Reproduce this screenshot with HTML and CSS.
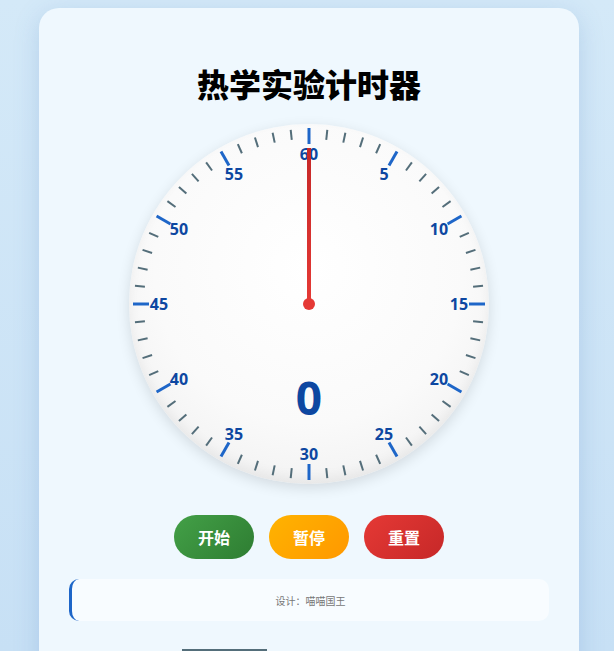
FILE: index.html
```html
<!DOCTYPE html>
<html lang="zh">
<head>
<meta charset="utf-8">
<link rel="stylesheet" href="styles.css">
</head>
<body>
<div class="card">
  <h1 class="title">热学实验计时器</h1>
  <div class="clock">
    <svg class="face" viewBox="-180 -180 360 360" width="360" height="360">
      <g class="minor">
        <line x1="0" y1="-175" x2="0" y2="-165" transform="rotate(6)"/>
        <line x1="0" y1="-175" x2="0" y2="-165" transform="rotate(12)"/>
        <line x1="0" y1="-175" x2="0" y2="-165" transform="rotate(18)"/>
        <line x1="0" y1="-175" x2="0" y2="-165" transform="rotate(24)"/>
        <line x1="0" y1="-175" x2="0" y2="-165" transform="rotate(36)"/>
        <line x1="0" y1="-175" x2="0" y2="-165" transform="rotate(42)"/>
        <line x1="0" y1="-175" x2="0" y2="-165" transform="rotate(48)"/>
        <line x1="0" y1="-175" x2="0" y2="-165" transform="rotate(54)"/>
        <line x1="0" y1="-175" x2="0" y2="-165" transform="rotate(66)"/>
        <line x1="0" y1="-175" x2="0" y2="-165" transform="rotate(72)"/>
        <line x1="0" y1="-175" x2="0" y2="-165" transform="rotate(78)"/>
        <line x1="0" y1="-175" x2="0" y2="-165" transform="rotate(84)"/>
        <line x1="0" y1="-175" x2="0" y2="-165" transform="rotate(96)"/>
        <line x1="0" y1="-175" x2="0" y2="-165" transform="rotate(102)"/>
        <line x1="0" y1="-175" x2="0" y2="-165" transform="rotate(108)"/>
        <line x1="0" y1="-175" x2="0" y2="-165" transform="rotate(114)"/>
        <line x1="0" y1="-175" x2="0" y2="-165" transform="rotate(126)"/>
        <line x1="0" y1="-175" x2="0" y2="-165" transform="rotate(132)"/>
        <line x1="0" y1="-175" x2="0" y2="-165" transform="rotate(138)"/>
        <line x1="0" y1="-175" x2="0" y2="-165" transform="rotate(144)"/>
        <line x1="0" y1="-175" x2="0" y2="-165" transform="rotate(156)"/>
        <line x1="0" y1="-175" x2="0" y2="-165" transform="rotate(162)"/>
        <line x1="0" y1="-175" x2="0" y2="-165" transform="rotate(168)"/>
        <line x1="0" y1="-175" x2="0" y2="-165" transform="rotate(174)"/>
        <line x1="0" y1="-175" x2="0" y2="-165" transform="rotate(186)"/>
        <line x1="0" y1="-175" x2="0" y2="-165" transform="rotate(192)"/>
        <line x1="0" y1="-175" x2="0" y2="-165" transform="rotate(198)"/>
        <line x1="0" y1="-175" x2="0" y2="-165" transform="rotate(204)"/>
        <line x1="0" y1="-175" x2="0" y2="-165" transform="rotate(216)"/>
        <line x1="0" y1="-175" x2="0" y2="-165" transform="rotate(222)"/>
        <line x1="0" y1="-175" x2="0" y2="-165" transform="rotate(228)"/>
        <line x1="0" y1="-175" x2="0" y2="-165" transform="rotate(234)"/>
        <line x1="0" y1="-175" x2="0" y2="-165" transform="rotate(246)"/>
        <line x1="0" y1="-175" x2="0" y2="-165" transform="rotate(252)"/>
        <line x1="0" y1="-175" x2="0" y2="-165" transform="rotate(258)"/>
        <line x1="0" y1="-175" x2="0" y2="-165" transform="rotate(264)"/>
        <line x1="0" y1="-175" x2="0" y2="-165" transform="rotate(276)"/>
        <line x1="0" y1="-175" x2="0" y2="-165" transform="rotate(282)"/>
        <line x1="0" y1="-175" x2="0" y2="-165" transform="rotate(288)"/>
        <line x1="0" y1="-175" x2="0" y2="-165" transform="rotate(294)"/>
        <line x1="0" y1="-175" x2="0" y2="-165" transform="rotate(306)"/>
        <line x1="0" y1="-175" x2="0" y2="-165" transform="rotate(312)"/>
        <line x1="0" y1="-175" x2="0" y2="-165" transform="rotate(318)"/>
        <line x1="0" y1="-175" x2="0" y2="-165" transform="rotate(324)"/>
        <line x1="0" y1="-175" x2="0" y2="-165" transform="rotate(336)"/>
        <line x1="0" y1="-175" x2="0" y2="-165" transform="rotate(342)"/>
        <line x1="0" y1="-175" x2="0" y2="-165" transform="rotate(348)"/>
        <line x1="0" y1="-175" x2="0" y2="-165" transform="rotate(354)"/>
      </g>
      <g class="major">
        <line x1="0" y1="-176" x2="0" y2="-160" transform="rotate(0)"/>
        <line x1="0" y1="-176" x2="0" y2="-160" transform="rotate(30)"/>
        <line x1="0" y1="-176" x2="0" y2="-160" transform="rotate(60)"/>
        <line x1="0" y1="-176" x2="0" y2="-160" transform="rotate(90)"/>
        <line x1="0" y1="-176" x2="0" y2="-160" transform="rotate(120)"/>
        <line x1="0" y1="-176" x2="0" y2="-160" transform="rotate(150)"/>
        <line x1="0" y1="-176" x2="0" y2="-160" transform="rotate(180)"/>
        <line x1="0" y1="-176" x2="0" y2="-160" transform="rotate(210)"/>
        <line x1="0" y1="-176" x2="0" y2="-160" transform="rotate(240)"/>
        <line x1="0" y1="-176" x2="0" y2="-160" transform="rotate(270)"/>
        <line x1="0" y1="-176" x2="0" y2="-160" transform="rotate(300)"/>
        <line x1="0" y1="-176" x2="0" y2="-160" transform="rotate(330)"/>
      </g>
      <g class="nums">
        <text x="0" y="-150">60</text>
        <text x="75" y="-130">5</text>
        <text x="130" y="-75">10</text>
        <text x="150" y="0">15</text>
        <text x="130" y="75">20</text>
        <text x="75" y="130">25</text>
        <text x="0" y="150">30</text>
        <text x="-75" y="130">35</text>
        <text x="-130" y="75">40</text>
        <text x="-150" y="0">45</text>
        <text x="-130" y="-75">50</text>
        <text x="-75" y="-130">55</text>
      </g>
      <defs>
        <linearGradient id="hand" x1="0" y1="0" x2="0" y2="1">
          <stop offset="0" stop-color="#c62828"/>
          <stop offset="1" stop-color="#e53935"/>
        </linearGradient>
      </defs>
      <rect class="hand" x="-2" y="-156" width="4" height="156" fill="url(#hand)"/>
      <circle class="pivot" cx="0" cy="0" r="6"/>
      <text class="count" x="0" y="93">0</text>
    </svg>
  </div>
  <div class="controls">
    <button class="btn start">开始</button>
    <button class="btn pause">暂停</button>
    <button class="btn reset">重置</button>
  </div>
  <div class="footer">设计：喵喵国王</div>
  <div class="peek"></div>
</div>
</body>
</html>
```
FILE: styles.css
```css
html, body {
  margin: 0;
  padding: 0;
}
body {
  width: 614px;
  height: 651px;
  overflow: hidden;
  background: linear-gradient(180deg, #d4e9f8 0%, #c7e0f5 100%);
  font-family: "Noto Sans CJK SC", "Noto Sans", sans-serif;
}
.card {
  box-sizing: border-box;
  width: 540px;
  margin: 8px 0 0 39px;
  padding: 25px 30px 30px;
  background: #eff8fe;
  border-radius: 20px;
  box-shadow: 0 6px 24px rgba(90, 140, 200, 0.25);
  display: flex;
  flex-direction: column;
  align-items: center;
}
.title {
  margin: 30px 0 0;
  font-size: 32px;
  line-height: 40px;
  font-weight: 900;
  color: #000;
  letter-spacing: 0;
}
.clock {
  width: 360px;
  height: 360px;
  margin-top: 21px;
  border-radius: 50%;
  background: radial-gradient(circle at 50% 40%, #ffffff 0%, #fafafa 55%, #ececec 100%);
  box-shadow: 0 4px 14px rgba(0, 0, 0, 0.12), inset 0 -6px 12px rgba(0, 0, 0, 0.05);
}
.face {
  display: block;
}
.minor line {
  stroke: #546e7a;
  stroke-width: 2;
}
.major line {
  stroke: #1e66c8;
  stroke-width: 3;
}
.nums text {
  font-family: "Open Sans", "Noto Sans", sans-serif;
  font-weight: 700;
  font-size: 16px;
  fill: #0d47a1;
  text-anchor: middle;
  dominant-baseline: central;
}
.pivot {
  fill: #e53935;
}
.count {
  font-family: "Open Sans", "Noto Sans", sans-serif;
  font-weight: 700;
  font-size: 46px;
  fill: #0d47a1;
  text-anchor: middle;
  dominant-baseline: central;
}
.controls {
  display: flex;
  gap: 15px;
  margin-top: 31px;
}
.btn {
  width: 80px;
  height: 44px;
  border: none;
  border-radius: 22px;
  color: #fff;
  font-family: "Noto Sans CJK SC", sans-serif;
  font-size: 16px;
  font-weight: 700;
  padding: 0;
}
.start {
  background: linear-gradient(135deg, #43a047, #2e7d32);
}
.pause {
  background: linear-gradient(135deg, #ffb300, #ff9800);
}
.reset {
  background: linear-gradient(135deg, #e53935, #c62828);
}
.footer {
  box-sizing: border-box;
  align-self: stretch;
  height: 42px;
  margin-top: 20px;
  background: #f8fcff;
  border-left: 3px solid #1e66c8;
  border-radius: 10px;
  display: flex;
  align-items: center;
  justify-content: center;
  font-size: 10px;
  color: #777;
}
.peek {
  align-self: flex-start;
  width: 85px;
  height: 2px;
  margin: 28px 0 0 113px;
  background: #546e7a;
}
```
